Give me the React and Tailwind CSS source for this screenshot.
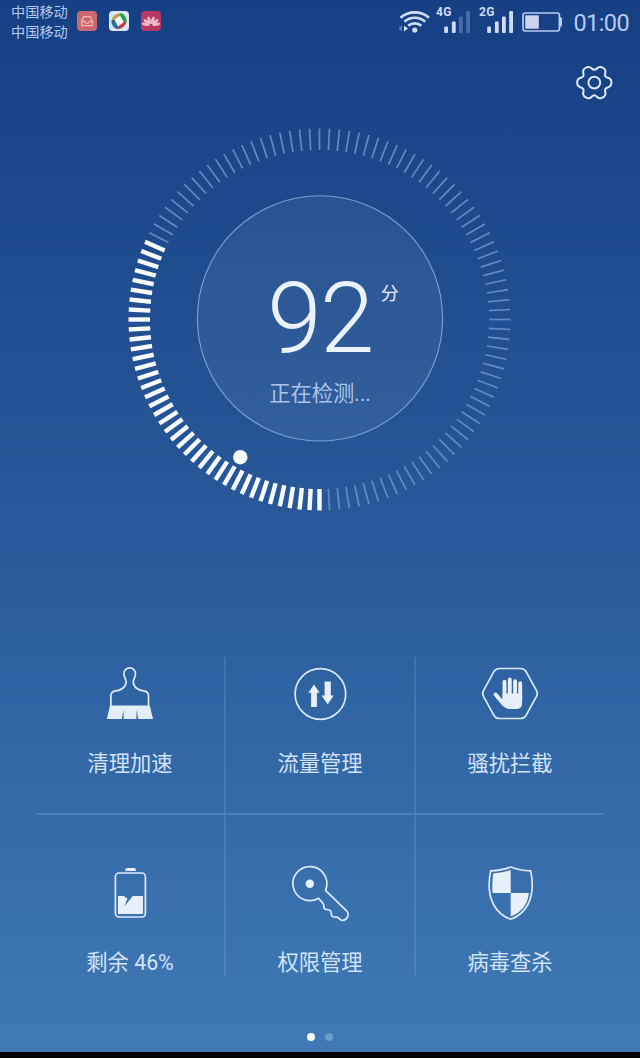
const DIAL_TICKS = 120;
const ACTIVE_TICKS = 38;

// Rounded six-lobe outline, smoothed through the midpoints of its control points
function gearPath(cx, cy) {
  const pts = [];
  for (let lobe = 0; lobe < 360; lobe += 60) {
    [[-13, 17.6], [13, 17.6], [30, 11.4]].forEach(([offset, r]) => {
      const a = ((lobe + offset) * Math.PI) / 180;
      pts.push([cx + r * Math.cos(a), cy + r * Math.sin(a)]);
    });
  }
  const mid = (p, q) => `${(p[0] + q[0]) / 2} ${(p[1] + q[1]) / 2}`;
  let d = `M${mid(pts[pts.length - 1], pts[0])}`;
  pts.forEach((p, i) => {
    d += `Q${p[0]} ${p[1]} ${mid(p, pts[(i + 1) % pts.length])}`;
  });
  return d + 'Z';
}

const InboxIcon = () => (
  <svg width="20" height="20" viewBox="0 0 20 20" fill="none">
    <rect width="20" height="20" rx="4" fill="#c9696f" />
    <path d="M6.6 5.6h6.800l1.900 4.500v4.500H4.700v-4.500z" stroke="#f3b9ae" strokeWidth="1.2" strokeLinejoin="round" />
    <path d="M5 10.3h2.800q.4 2 2.300 2t2.300-2h2.700" stroke="#f3b9ae" strokeWidth="1.2" />
  </svg>
);

const SafeIcon = () => (
  <svg width="20" height="20" viewBox="0 0 20 20" fill="none">
    <rect width="20" height="20" rx="4" fill="#dbe7f5" />
    <path d="M2.6 8.500Q4.500 2.500 11.500 1.900L13 4.300 5.600 9z" fill="#b9a53c" />
    <path d="M11.800 1.900Q17.500 3.800 17.700 10.500L15 12 10 5z" fill="#2f9a50" />
    <path d="M17.500 11.300Q15.200 17.500 8.500 18.200L7 15.800l7.300-4.800z" fill="#b83a3d" />
    <path d="M8.200 18.200Q2.500 16.200 2.300 9.500L5 8.200l5.200 7z" fill="#2b6c9c" />
    <path d="M5.400 8.600l5.800-3.800 3.600 6.400-5.800 4.200z" fill="#eef5fb" />
  </svg>
);

const PetalIcon = () => (
  <svg width="20" height="20" viewBox="0 0 20 20" fill="none">
    <rect width="20" height="20" rx="4" fill="#b63a62" />
    <g fill="#f0b9cb">
      {[-78, -50, -18, 18, 50, 78].map((angle) => (
        <ellipse key={angle} cx="10" cy="9" rx="1.5" ry="3.9" transform={`rotate(${angle} 10 14.5)`} />
      ))}
    </g>
  </svg>
);

const WifiIcon = () => (
  <svg width="34" height="26" viewBox="0 0 34 26" fill="none">
    <path d="M-1 19.5l4-3v6z" fill="#4f7fd0" />
    <path d="M5 16.500l4 3-4 3z" fill="#dbe6fb" />
    <g stroke="#cfdcf5" strokeWidth="2.600">
      <path d="M1.500 8.800Q7.500 3.400 15.800 3.400T30 8.800" />
      <path d="M5.400 12.800Q9.800 8.800 15.800 8.800t10.400 4" />
      <path d="M9.200 16.800Q12 14.400 15.800 14.400t6.600 2.400" />
    </g>
    <circle cx="15.800" cy="21" r="2.600" fill="#cfdcf5" />
  </svg>
);

const SignalIcon = ({ label, level }) => (
  <svg width="38" height="30" viewBox="0 0 38 30" className="font-['Roboto',sans-serif]">
    <text x="0" y="11.2" fontSize="12" fontWeight="700" fill="#cfdcf5" textLength="15.5">{label}</text>
    {[
      { x: 8.2, h: 6.5 },
      { x: 15.9, h: 11.5 },
      { x: 23, h: 16.5 },
      { x: 30.2, h: 22 },
    ].map((bar, i) => (
      <rect
        key={bar.x}
        x={bar.x}
        y={28 - bar.h}
        width="3.8"
        height={bar.h}
        rx="1"
        fill={i < level ? '#cfdcf5' : '#4a6cab'}
      />
    ))}
  </svg>
);

const BatteryStatus = () => (
  <svg width="41" height="22" viewBox="0 0 41 22" fill="none">
    <rect x="1" y="2" width="36.4" height="18" rx="2.2" stroke="#b9cdf2" strokeWidth="1.7" />
    <path d="M37.800 6q2.200 0 2.200 2v6q0 2-2.200 2z" fill="#b9cdf2" />
    <rect x="3.2" y="4.300" width="13.600" height="13.400" fill="#cdd3ee" />
  </svg>
);

const GearIcon = () => (
  <svg width="44" height="44" viewBox="0 0 44 44" fill="none" stroke="#dde9fb" strokeWidth="2">
    <path d={gearPath(22.3, 22.6)} />
    <circle cx="22.3" cy="22.6" r="5.9" />
  </svg>
);

const BrushIcon = () => (
  <svg width="64" height="64" viewBox="0 0 64 64" fill="none">
    <path
      d="M12.900 45V34q0-4.300 4-4.800C23 28.500 28.100 25 28.100 20c0-3-2.200-5-2.200-8.300a5.800 5.800 0 0 1 11.600 0c0 3.300-2.200 5.300-2.200 8.300 0 5 5.100 8.500 11.200 9.200q4 .5 4 4.800v11"
      stroke="#dceafc"
      strokeWidth="1.7"
    />
    <path d="M12 43.500h39.800L55 57H40.200l-1.500-9-.3 9H25.700l-.3-9-1.500 9H8.800z" fill="#e4edfa" />
  </svg>
);

const TrafficIcon = () => (
  <svg width="64" height="64" viewBox="0 0 64 64" fill="none">
    <circle cx="32.4" cy="32" r="25.3" stroke="#dceafc" strokeWidth="1.7" />
    <path d="M26 22.500l5.600 8.300h-2.700V45h-5.800V30.800h-2.700z" fill="#e8f0fc" />
    <path d="M36.600 19.500h6.200v14h2.800l-5.900 8.900-6-8.900h2.900z" fill="#e8f0fc" />
  </svg>
);

const BlockIcon = () => (
  <svg width="64" height="64" viewBox="0 0 64 64" fill="none">
    <path
      d="M21.500 6.500h21q3.800 0 5.600 3.200l10.400 18.900q1.500 2.900 0 5.800L48.100 53.300q-1.800 3.200-5.600 3.200h-21q-3.800 0-5.600-3.200L5.500 34.400q-1.500-2.900 0-5.800L15.900 9.700q1.800-3.200 5.600-3.200z"
      stroke="#dceafc"
      strokeWidth="1.7"
    />
    <g stroke="#e8f0fc" strokeWidth="3.9" strokeLinecap="round">
      <path d="M26.500 19.800V38M31.800 17.500V38M37.100 19.200V38M42.200 21.300V38" />
      <path d="M17.600 32.500l8 9.600" />
    </g>
    <path d="M24.600 31.500h19.500V41q0 6-6 6h-7q-3.500 0-5.600-2.700L21.500 39l3.100-1.500z" fill="#e8f0fc" />
  </svg>
);

const BatteryIcon = () => (
  <svg width="64" height="64" viewBox="0 0 64 64" fill="none">
    <path d="M27.300 10V9q0-2 2-2h6.600q2 0 2 2v1z" fill="#e8f0fc" />
    <rect x="17.4" y="12" width="30" height="44" rx="3.5" stroke="#dceafc" strokeWidth="1.7" />
    <path d="M20 35h6.300q.2 1.800 3.200 2.100l-3 8.200L34.800 35H45v18H20z" fill="#e8f0fc" />
  </svg>
);

const KeyIcon = () => (
  <svg width="64" height="64" viewBox="0 0 64 64" fill="none">
    <path
      d="M30.600 37.200A17 17 0 1 1 37.500 29.300L58.600 49.800q2.500 3 .8 6.500-2.400 4-6.400 2.700l-3.600-2.900q-5.800.6-6-2.300l-.3-2.800q-1.100-2.500-4.300-2.500-2.600.2-3-2.600.4-2.600-1-3.800z"
      stroke="#dceafc"
      strokeWidth="1.7"
      strokeLinejoin="round"
    />
    <circle cx="21.8" cy="22.7" r="4.2" fill="#e8f0fc" />
  </svg>
);

const ShieldIcon = () => (
  <svg width="64" height="64" viewBox="0 0 64 64" fill="none">
    <path
      d="M32.700 6Q24 9.500 12.700 9.800 8.500 30 15.500 43.500 21.500 54.500 32.700 58.200 43.900 54.500 49.900 43.500 56.900 30 52.700 9.800 41.400 9.500 32.700 6z"
      stroke="#dceafc"
      strokeWidth="1.7"
      strokeLinejoin="round"
    />
    <path d="M32.700 9v23H14.600q-.8-9.500.6-19.600Q25 12 32.700 9z" fill="#e8f0fc" />
    <path d="M32.700 32h18.200q-1.600 17-18.200 23.500z" fill="#e8f0fc" />
  </svg>
);

const StatusBar = () => (
  <header className="flex h-[45px] justify-between">
    <div className="flex pl-[11px]">
      <div className="flex w-[66px] flex-col pt-[2px] text-[14.2px] leading-5 text-[#b4c8ee]">
        <span>中国移动</span>
        <span>中国移动</span>
      </div>
      <div className="flex gap-3 pt-[11px]">
        <InboxIcon />
        <SafeIcon />
        <PetalIcon />
      </div>
    </div>
    <div className="flex pr-[11px]">
      <div className="pt-[9px]"><WifiIcon /></div>
      <div className="ml-[3px] flex gap-[5px] pt-[5px]">
        <SignalIcon label="4G" level={2} />
        <SignalIcon label="2G" level={4} />
      </div>
      <div className="ml-[5px] pt-[11px]"><BatteryStatus /></div>
      <span className="ml-[7px] w-[59px] pt-[8px] text-right text-[23.5px] leading-[30px] tracking-[-0.6px] whitespace-nowrap text-[#b6caf0]">
        01:00
      </span>
    </div>
  </header>
);

const ScoreDial = ({ score }) => (
  <section className="relative mx-auto size-[400px]">
    <svg width="400" height="400" viewBox="0 0 400 400" fill="none">
      {Array.from({ length: DIAL_TICKS }, (_, i) => (
        <line
          key={i}
          x1="199.5"
          x2="199.5"
          y1="369"
          y2="390.5"
          transform={`rotate(${i * 3} 199.5 199.5)`}
          stroke={i <= ACTIVE_TICKS ? '#f8fbff' : '#6389c6'}
          strokeWidth={i <= ACTIVE_TICKS ? 4.4 : 1.7}
        />
      ))}
      <circle cx="200" cy="198.4" r="122.6" fill="#ffffff" fillOpacity="0.06" stroke="#7d9fd3" strokeWidth="1.1" />
      <circle cx="120.3" cy="337.2" r="7.2" fill="#fdfdfd" />
    </svg>
    <div className="absolute inset-0 flex flex-col items-center pt-[149px]">
      <div className="relative">
        <span className="block text-[98px] leading-[100px] font-light tracking-[-1.5px] text-[#eaf2fe]">{score}</span>
        <span className="absolute top-[13px] left-full ml-[8px] text-[18px] leading-6 text-[#eaf2fe]">分</span>
      </div>
      <span className="mt-[9px] text-[21.3px] leading-8 tracking-[-0.1px] text-[#abc3e8]">正在检测...</span>
    </div>
  </section>
);

const rows = [
  [
    { label: '清理加速', Icon: BrushIcon },
    { label: '流量管理', Icon: TrafficIcon },
    { label: '骚扰拦截', Icon: BlockIcon },
  ],
  [
    { label: '剩余 46%', Icon: BatteryIcon },
    { label: '权限管理', Icon: KeyIcon },
    { label: '病毒查杀', Icon: ShieldIcon },
  ],
];

const MenuRow = ({ items, className }) => (
  <div className={`grid grid-cols-[190px_190px_188px] ${className}`}>
    {items.map(({ label, Icon }) => (
      <button
        key={label}
        className="flex flex-col items-center border-r-2 border-[#98c0e8]/20 last:border-r-0"
      >
        <Icon />
        <span className="mt-[26px] text-[21.3px] leading-6 whitespace-nowrap text-[#d3e4fa]">{label}</span>
      </button>
    ))}
  </div>
);

export default function App() {
  return (
    <div className="flex h-[1058px] w-[640px] flex-col overflow-hidden bg-black font-['Roboto','Noto_Sans_CJK_SC',sans-serif]">
      <main className="flex h-[1052px] flex-col bg-linear-to-b from-[#163f84] via-[#285899] via-48% to-[#4079b6]">
        <StatusBar />
        <div className="flex h-[75px] justify-end pt-[15px] pr-6">
          <GearIcon />
        </div>
        <ScoreDial score={92} />
        <nav className="mt-[137px] px-9">
          <MenuRow
            items={rows[0]}
            className="h-[158px] border-b-2 border-[#98c0e8]/25 [&>button]:pt-[5px]"
          />
          <MenuRow items={rows[1]} className="h-[159px] [&>button]:pt-[46px]" />
        </nav>
        <div className="mt-[59px] flex justify-center gap-[10px]">
          <span className="size-2 rounded-full bg-white" />
          <span className="size-2 rounded-full bg-[#6d98ca]" />
        </div>
      </main>
    </div>
  );
}
